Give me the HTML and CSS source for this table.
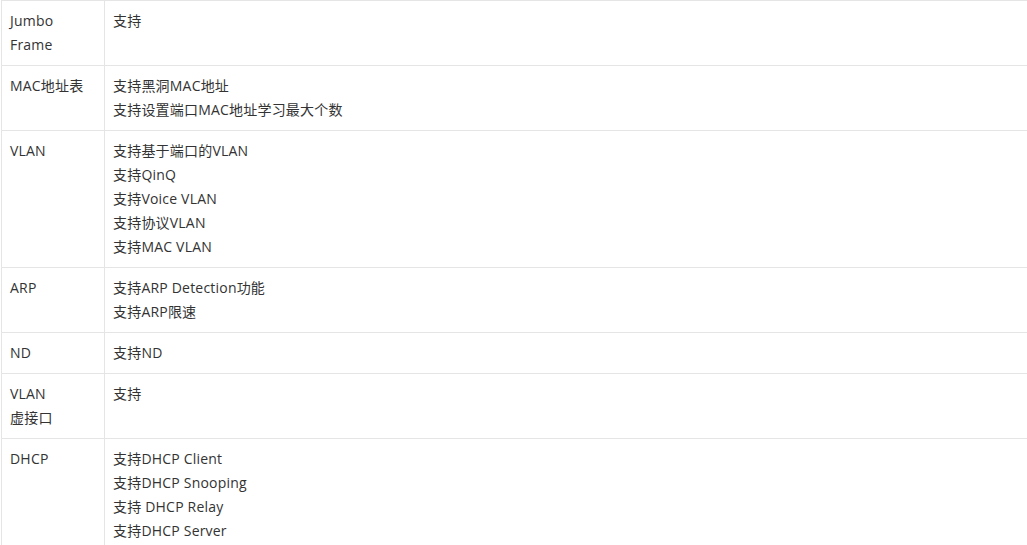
FILE: index.html
```html
<!DOCTYPE html>
<html lang="zh-CN">
<head>
<meta charset="utf-8">
<link rel="stylesheet" href="styles.css">
</head>
<body>
<table class="spec">
  <tr><td class="k">Jumbo<br>Frame</td><td class="v">支持</td></tr>
  <tr><td class="k">MAC地址表</td><td class="v">支持黑洞MAC地址<br>支持设置端口MAC地址学习最大个数</td></tr>
  <tr><td class="k">VLAN</td><td class="v">支持基于端口的VLAN<br>支持QinQ<br>支持Voice VLAN<br>支持协议VLAN<br>支持MAC VLAN</td></tr>
  <tr><td class="k">ARP</td><td class="v">支持ARP Detection功能<br>支持ARP限速</td></tr>
  <tr><td class="k">ND</td><td class="v">支持ND</td></tr>
  <tr><td class="k">VLAN<br>虚接口</td><td class="v">支持</td></tr>
  <tr><td class="k">DHCP</td><td class="v">支持DHCP Client<br>支持DHCP Snooping<br>支持 DHCP Relay<br>支持DHCP Server</td></tr>
</table>
</body>
</html>
```

FILE: styles.css
```css
html, body {
  margin: 0;
  padding: 0;
  background: #fff;
  overflow: hidden;
}
.spec {
  margin-left: 1px;
  width: 1040px;
  border-collapse: collapse;
  font-family: "Open Sans", "Noto Sans CJK SC", sans-serif;
  font-size: 14px;
  line-height: 24px;
  color: #333;
  letter-spacing: 0.2px;
}
.spec td {
  border: 1px solid #e5e5e5;
  padding: 8px 8px;
  vertical-align: top;
  text-align: left;
}
.spec td.k {
  width: 86px;
}
```
